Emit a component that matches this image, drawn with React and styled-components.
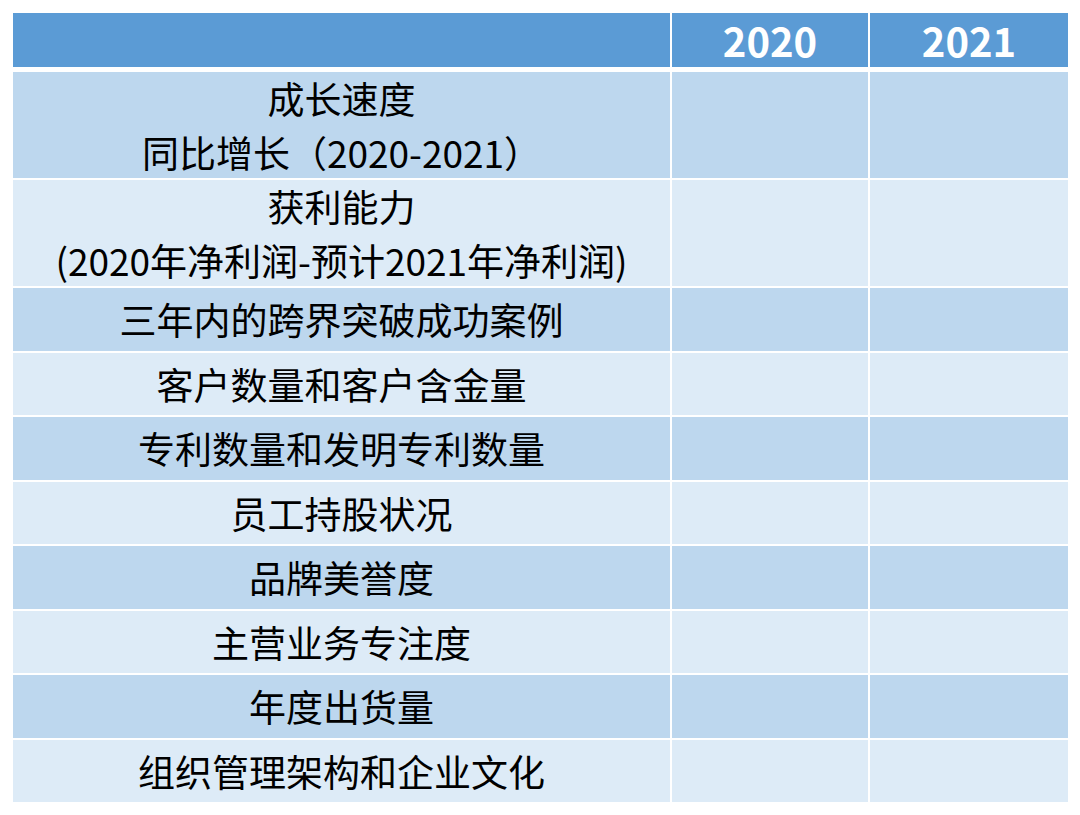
import React from "react";
import styled, { createGlobalStyle } from "styled-components";

const GlobalStyle = createGlobalStyle`
  html, body {
    margin: 0;
    padding: 0;
    background: #ffffff;
  }
  body {
    font-family: "Noto Sans CJK SC", "Noto Sans", sans-serif;
  }
`;

const rows = [
  { label: ["成长速度", "同比增长（2020-2021）"], tall: true },
  { label: ["获利能力", "(2020年净利润-预计2021年净利润)"], tall: true },
  { label: ["三年内的跨界突破成功案例"] },
  { label: ["客户数量和客户含金量"] },
  { label: ["专利数量和发明专利数量"] },
  { label: ["员工持股状况"] },
  { label: ["品牌美誉度"] },
  { label: ["主营业务专注度"] },
  { label: ["年度出货量"] },
  { label: ["组织管理架构和企业文化"] },
];

const Page = styled.div`
  padding: 13px 0 0 13px;
`;

const Table = styled.div`
  display: grid;
  grid-template-columns: 657px 196px 198px;
  column-gap: 2px;
  row-gap: 2px;
  width: 1055px;
`;

const HeadCell = styled.div`
  height: 54px;
  margin-bottom: 3px;
  background: #5b9bd5;
  color: #ffffff;
  font-size: 40px;
  font-weight: 700;
  display: flex;
  align-items: center;
  justify-content: center;
  line-height: 1;
`;

const Cell = styled.div`
  height: ${(p) => (p.$tall ? "106px" : "62.5px")};
  background: ${(p) => (p.$shade ? "#bdd7ee" : "#ddebf7")};
  display: flex;
  flex-direction: column;
  align-items: center;
  justify-content: center;
  color: #000000;
  font-size: 37px;
  line-height: 54px;
  text-align: center;
  white-space: nowrap;
`;

export default function App() {
  return (
    <>
      <GlobalStyle />
      <Page>
        <Table>
          <HeadCell />
          <HeadCell>2020</HeadCell>
          <HeadCell>2021</HeadCell>
          {rows.map((row, i) => (
            <React.Fragment key={i}>
              <Cell $tall={row.tall} $shade={i % 2 === 0}>
                {row.label.map((line) => (
                  <span key={line}>{line}</span>
                ))}
              </Cell>
              <Cell $tall={row.tall} $shade={i % 2 === 0} />
              <Cell $tall={row.tall} $shade={i % 2 === 0} />
            </React.Fragment>
          ))}
        </Table>
      </Page>
    </>
  );
}
